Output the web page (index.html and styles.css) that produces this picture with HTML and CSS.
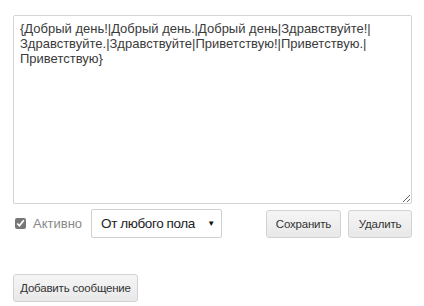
FILE: index.html
```html
<!DOCTYPE html>
<html>
<head>
<meta charset="utf-8">
<link rel="stylesheet" href="styles.css">
</head>
<body>
<div class="page">
  <textarea class="msg">{Добрый день!|Добрый день.|Добрый день|Здравствуйте!|Здравствуйте.|Здравствуйте|Приветствую!|Приветствую.|Приветствую}</textarea>
  <div class="row">
    <label class="active"><input type="checkbox" checked> Активно</label>
    <div class="select"><span>От любого пола</span><span class="arrow">▼</span></div>
    <div class="spacer"></div>
    <button class="btn save">Сохранить</button>
    <button class="btn del">Удалить</button>
  </div>
  <div class="add-row">
    <button class="btn add">Добавить сообщение</button>
  </div>
</div>
</body>
</html>
```
FILE: styles.css
```css
html, body {
  margin: 0;
  padding: 0;
  background: #fff;
  font-family: "Liberation Sans", Arial, sans-serif;
}
.page {
  padding: 15px 12px 0 13px;
  width: 399px;
}
.msg {
  display: block;
  box-sizing: border-box;
  width: 399px;
  height: 189px;
  margin: 0;
  padding: 5px 6px;
  border: 1px solid #d4d4d4;
  border-radius: 2px;
  font-family: "Liberation Sans", Arial, sans-serif;
  font-size: 13px;
  line-height: 15px;
  color: #3a3a3a;
  resize: vertical;
  outline: none;
}
.row {
  display: flex;
  align-items: center;
  margin-top: 5px;
  height: 29px;
}
.active {
  display: flex;
  align-items: center;
  font-size: 13px;
  color: #888;
  margin-left: 2px;
  white-space: nowrap;
}
.active input {
  width: 11px;
  height: 11px;
  margin: 0 7px 0 0;
  accent-color: #777;
}
.select {
  box-sizing: border-box;
  margin-left: 9px;
  width: 131px;
  height: 29px;
  border: 1px solid #d0d0d0;
  border-radius: 2px;
  display: flex;
  align-items: center;
  justify-content: space-between;
  padding: 0 6px 0 9px;
  font-size: 13.5px;
  letter-spacing: -0.4px;
  color: #222;
  white-space: nowrap;
}
.arrow {
  font-size: 8px;
  letter-spacing: 0;
  color: #111;
}
.spacer { flex: 1; }
.btn {
  box-sizing: border-box;
  height: 28px;
  border: 1px solid #d2d2d2;
  border-radius: 3px;
  background: linear-gradient(#f5f5f5, #e8e8e8);
  font-family: "Liberation Sans", Arial, sans-serif;
  font-size: 11.5px;
  letter-spacing: -0.2px;
  color: #333;
  padding: 0 4px;
  white-space: nowrap;
}
.save { width: 75px; }
.del { width: 64px; margin-left: 7px; }
.add-row {
  margin-top: 36px;
}
.add { width: 125px; }
```
